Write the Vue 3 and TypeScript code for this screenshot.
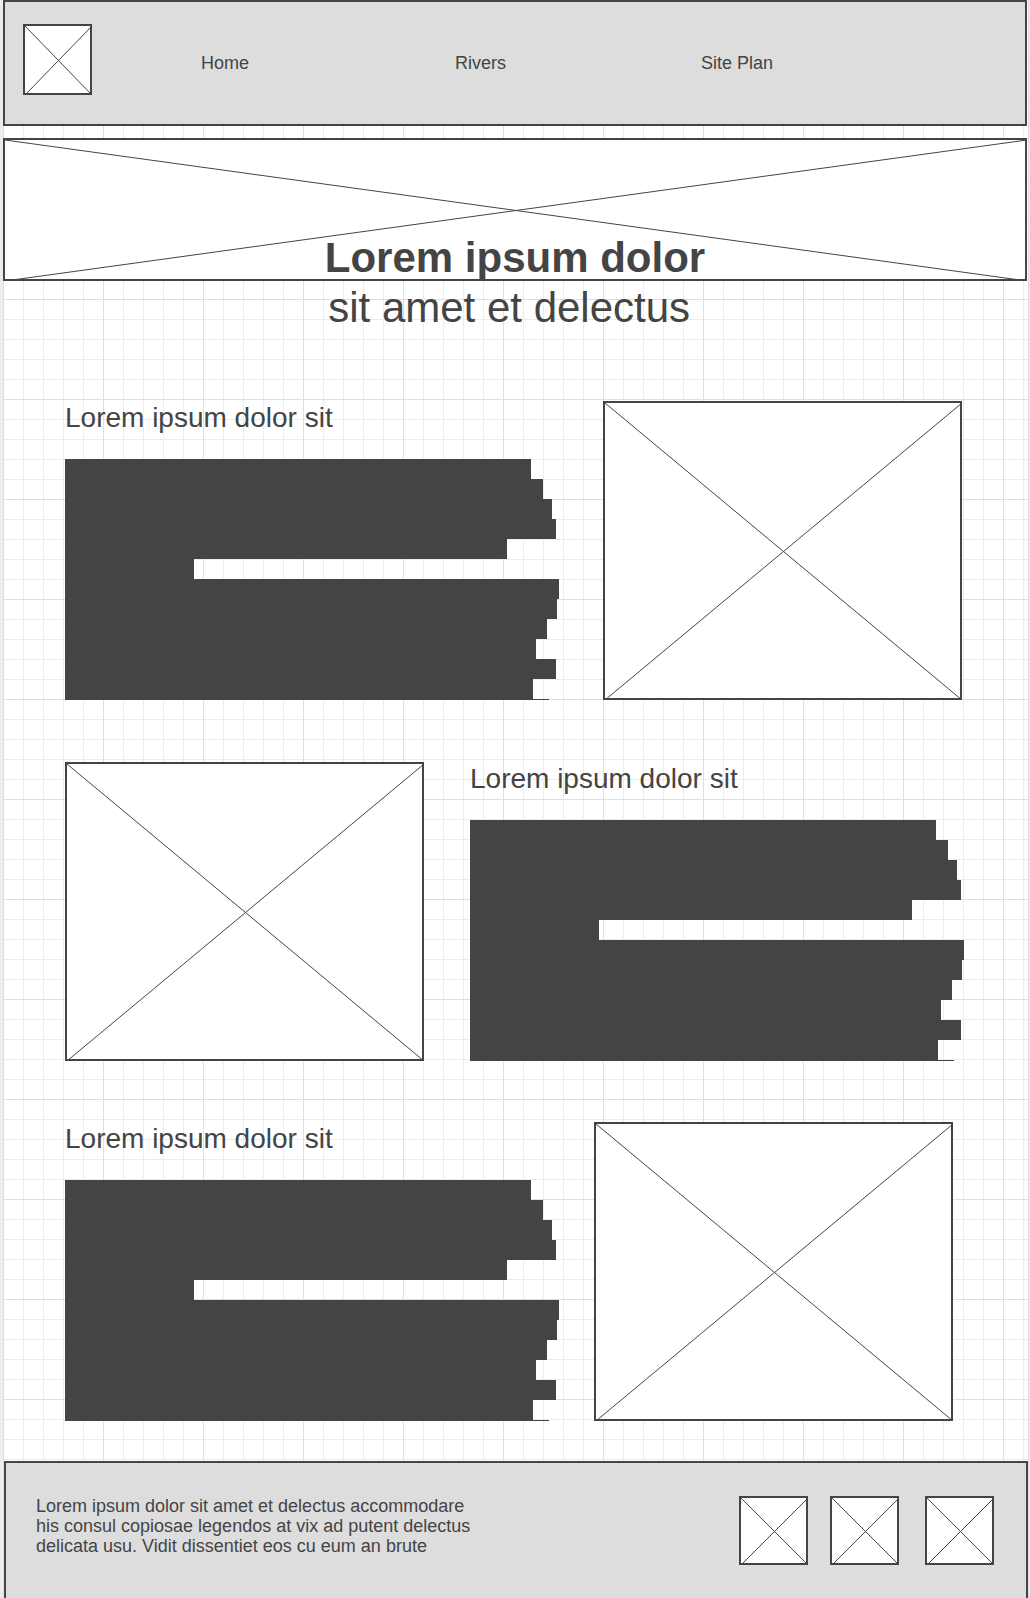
<script setup lang="ts">
import { defineComponent, h } from 'vue'

interface Section {
  id: number
  title: string
  layout: 'image-right' | 'image-left' | 'image-inset'
}

// Empty picture frame crossed by its two diagonals
const Placeholder = defineComponent({
  props: { label: { type: String, required: true } },
  setup(props) {
    return () =>
      h('div', { class: 'placeholder', role: 'img', 'aria-label': props.label }, [
        h('svg', { 'aria-hidden': 'true' }, [
          h('line', { x1: '0', y1: '0', x2: '100%', y2: '100%' }),
          h('line', { x1: '0', y1: '100%', x2: '100%', y2: '0' }),
        ]),
      ])
  },
})

const links: string[] = ['Home', 'Rivers', 'Site Plan']

const sections: Section[] = [
  { id: 1, title: 'Lorem ipsum dolor sit', layout: 'image-right' },
  { id: 2, title: 'Lorem ipsum dolor sit', layout: 'image-left' },
  { id: 3, title: 'Lorem ipsum dolor sit', layout: 'image-inset' },
]

// Length of each blocked-out line of body copy
const lineWidths: number[] = [466, 478, 487, 491, 442, 129, 494, 492, 482, 471, 491, 468, 484]

const socials: string[] = ['First', 'Second', 'Third']
</script>

<template>
  <div class="canvas">
    <header class="header">
      <Placeholder class="logo" label="Logo" />
      <nav class="nav">
        <a v-for="link in links" :key="link" href="#">{{ link }}</a>
      </nav>
    </header>

    <Placeholder class="hero" label="Banner" />
    <h1 class="title"><strong>Lorem ipsum dolor</strong><span>sit amet et delectus&nbsp;</span></h1>

    <main>
      <section v-for="s in sections" :key="s.id" class="section" :class="s.layout">
        <div class="copy">
          <h2>{{ s.title }}</h2>
          <div class="lines">
            <div v-for="(w, i) in lineWidths" :key="i" class="line" :style="{ width: w + 'px' }"></div>
          </div>
        </div>
        <Placeholder class="picture" label="Picture" />
      </section>
    </main>

    <footer class="footer">
      <p>
        Lorem ipsum dolor sit amet et delectus accommodare<br />
        his consul copiosae legendos at vix ad putent delectus<br />
        delicata usu. Vidit dissentiet eos cu eum an brute
      </p>
      <div class="icons">
        <Placeholder v-for="s in socials" :key="s" class="icon" :label="s" />
      </div>
    </footer>
  </div>
</template>

<style>
body {
  margin: 0;
  background: #ececec;
}

.placeholder {
  box-sizing: border-box;
  border: 2px solid #444;
  background: #fff;
  overflow: hidden;
}

.placeholder svg {
  display: block;
  width: calc(100% + 2px);
  height: calc(100% + 2px);
}

.placeholder line {
  stroke: #444;
  stroke-width: 1px;
}
</style>

<style scoped>
.canvas {
  display: flex;
  flex-direction: column;
  box-sizing: border-box;
  min-height: 100vh;
  margin: 0 1px 0 3px;
  border-right: 1px solid #ddd;
  color: #444;
  font-family: "Liberation Sans", Arial, sans-serif;
  font-size: 18px;
  line-height: 20px;
  background-color: #fff;
  background-image:
    linear-gradient(to right, #dfdfdf 1px, transparent 1px),
    linear-gradient(to top, #dfdfdf 1px, transparent 1px),
    linear-gradient(to right, #ececec 1px, transparent 1px),
    linear-gradient(to top, #ececec 1px, transparent 1px);
  background-size: 100px 100px, 100px 100px, 20px 20px, 20px 20px;
}

.header {
  display: flex;
  align-items: center;
  box-sizing: border-box;
  height: 126px;
  margin: 0 1px 12px 0;
  padding-left: 18px;
  border: 2px solid #444;
  background: #ddd;
}

.logo {
  flex: none;
  width: 69px;
  height: 71px;
  margin-bottom: 7px;
}

.nav {
  flex: 1;
  display: grid;
  grid-template-columns: 254fr 246fr 324fr;
  margin-left: 109px;
}

.nav a {
  justify-self: start;
  color: inherit;
  text-decoration: none;
}

.hero {
  height: 143px;
  margin-right: 1px;
}

.title {
  position: relative;
  display: flex;
  flex-direction: column;
  align-items: center;
  margin: -48px 1px 68px 0;
  font-size: 42px;
  font-weight: 400;
  line-height: 50px;
}

.section {
  display: flex;
  justify-content: space-between;
  margin-bottom: 61px;
  padding: 0 66px 0 62px;
}

.section:first-child {
  margin-bottom: 62px;
}

.section:last-child {
  margin-bottom: 40px;
}

.image-left {
  flex-direction: row-reverse;
  padding-right: 64px;
}

.image-inset {
  padding-right: 75px;
}

.copy {
  flex: 0 0 494px;
}

.copy h2 {
  margin: 0 0 24px;
  font-size: 28px;
  font-weight: 400;
  line-height: 34px;
}

.line {
  height: 20px;
  background: #444;
}

.line:nth-child(13) {
  height: 1px;
}

.picture {
  flex: 0 1 359px;
  height: 299px;
}

.footer {
  flex: 1;
  display: flex;
  justify-content: space-between;
  align-items: flex-start;
  margin-left: 1px;
  padding: 33px 32px 33px 30px;
  border: 2px solid #444;
  border-bottom: 0;
  background: #ddd;
}

.footer p {
  margin: 0;
}

.icons {
  display: flex;
}

.icon {
  width: 69px;
  height: 69px;
}

.icon:nth-child(2) {
  margin: 0 26px 0 22px;
}
</style>
